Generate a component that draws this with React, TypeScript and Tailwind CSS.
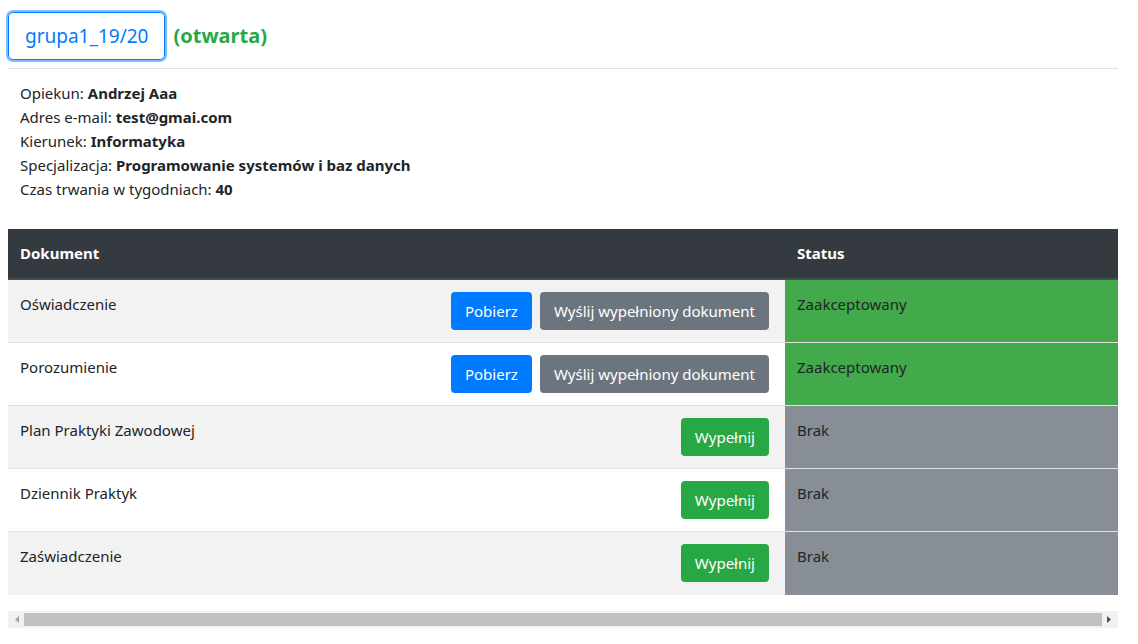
import React from 'react'

const font = { fontFamily: '"Segoe UI", "Noto Sans", "Liberation Sans", sans-serif' }

type Row = {
  name: string
  status: 'ok' | 'none'
}

const rows: Row[] = [
  { name: 'Oświadczenie', status: 'ok' },
  { name: 'Porozumienie', status: 'ok' },
  { name: 'Plan Praktyki Zawodowej', status: 'none' },
  { name: 'Dziennik Praktyk', status: 'none' },
  { name: 'Zaświadczenie', status: 'none' },
]

function Info({ label, value }: { label: string; value: string }) {
  return (
    <div className="leading-6">
      {label}: <b className="font-bold">{value}</b>
    </div>
  )
}

export default function App() {
  return (
    <div className="min-h-[644px] bg-white text-[15px] text-[#212529] pl-2 pr-[20px]" style={font}>
      <div className="flex items-center gap-[8px] pt-[12px] pb-[8px]">
        <button className="h-[48px] px-[16px] rounded-[5px] border border-[#007bff] text-[#007bff] text-[19px] leading-[30px] ring-[2px] ring-[#80bdff]">
          grupa1_19/20
        </button>
        <span className="text-[20px] font-bold text-[#28a745]">(otwarta)</span>
      </div>
      <hr className="border-0 border-t border-[#e1e1e1] mb-[12px]" />

      <div className="px-3">
        <Info label="Opiekun" value="Andrzej Aaa" />
        <Info label="Adres e-mail" value="test@gmai.com" />
        <Info label="Kierunek" value="Informatyka" />
        <Info label="Specjalizacja" value="Programowanie systemów i baz danych" />
        <Info label="Czas trwania w tygodniach" value="40" />
      </div>

      <div className="mt-[28px]">
        <table className="w-full border-collapse">
          <thead>
            <tr className="bg-[#343a40] text-white">
              <th className="text-left font-bold px-3 h-[50px] border-b-2 border-[#454d55]">Dokument</th>
              <th className="text-left font-bold px-3 w-[333px] border-b-2 border-[#454d55]">Status</th>
            </tr>
          </thead>
          <tbody>
            {rows.map((r, i) => (
              <tr key={r.name} className={i % 2 === 0 ? 'bg-[#f2f2f2]' : 'bg-white'}>
                <td className="px-3 pt-[12px] pb-[12px] h-[63px] align-top border-t border-[#dee2e6]">
                  <div className="flex justify-between items-start">
                    <span className="leading-6">{r.name}</span>
                    <div className="flex gap-2 mr-1">
                      {r.status === 'ok' ? (
                        <>
                          <button className="h-[38px] px-[14px] rounded bg-[#007bff] text-white">Pobierz</button>
                          <button className="h-[38px] px-[14px] rounded bg-[#6c757d] text-white">Wyślij wypełniony dokument</button>
                        </>
                      ) : (
                        <button className="h-[38px] px-[14px] rounded bg-[#28a745] text-white">Wypełnij</button>
                      )}
                    </div>
                  </div>
                </td>
                <td
                  className={
                    'px-3 pt-[12px] align-top border-t leading-6 ' +
                    (r.status === 'ok' ? 'bg-[#42aa4a] border-[#dee2e6]' : 'bg-[#878e95] border-[#dee2e6]')
                  }
                >
                  {r.status === 'ok' ? 'Zaakceptowany' : 'Brak'}
                </td>
              </tr>
            ))}
          </tbody>
        </table>
        <div className="mt-[16px] h-[17px] bg-[#f1f1f1] flex items-center px-[2px]">
          <span className="w-[14px] flex justify-center">
            <svg width="4" height="7" viewBox="0 0 4 7"><path d="M4 0 L0 3.5 L4 7Z" fill="#a3a3a3" /></svg>
          </span>
          <div className="flex-1 h-[13px] bg-[#c1c1c1]" />
          <span className="w-[14px] flex justify-center">
            <svg width="4" height="7" viewBox="0 0 4 7"><path d="M0 0 L4 3.5 L0 7Z" fill="#505050" /></svg>
          </span>
        </div>
      </div>
    </div>
  )
}
